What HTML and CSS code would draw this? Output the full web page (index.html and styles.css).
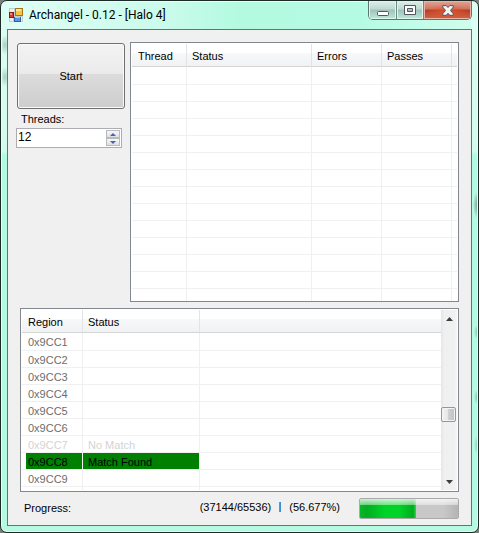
FILE: index.html
```html
<!DOCTYPE html>
<html lang="en">
<head>
<meta charset="utf-8">
<title>Archangel - 0.12 - [Halo 4]</title>
<link rel="stylesheet" href="styles.css">
</head>
<body>
<div class="window">
  <header class="titlebar">
    <svg class="app-icon" width="14" height="14" viewBox="0 0 14 14" aria-hidden="true">
      <path d="M0 0h14v14H0z" fill="#c3cfce"/>
      <path d="M1 1h4v3H1zM1 10h3v3H1zM12 9h1v4h-1z" fill="#e9f3f1"/>
      <path d="M6 0h8v8H6z" fill="#a87713"/>
      <path d="M7 1h6v6H7z" fill="#f7c53c"/>
      <path d="M7 1h5v2H7z" fill="#ffe9a0"/>
      <path d="M0 4h5v6H0z" fill="#8c1713"/>
      <path d="M1 5h3v4H1z" fill="#dc3c30"/>
      <path d="M1 5h2v2H1z" fill="#f08a80"/>
      <path d="M5 9h7v5H5z" fill="#315fae"/>
      <path d="M6 9h5v4H6z" fill="#5c94e6"/>
      <path d="M6 9h5v1H6z" fill="#a9c8f7"/>
    </svg>
    <h1 class="title">Archangel - 0.12 - [Halo 4]</h1>
    <div class="caption-buttons">
      <button class="caption" type="button" aria-label="Minimize">
        <svg width="12" height="5" viewBox="0 0 12 5"><rect x=".5" y=".5" width="11" height="4" rx="1" fill="#fff" stroke="#53565f"/></svg>
      </button>
      <button class="caption caption-max" type="button" aria-label="Maximize">
        <svg width="12" height="10" viewBox="0 0 12 10"><path fill-rule="evenodd" d="M.5.5h11v9H.5zM3.5 3.5v3h5v-3z" fill="#fff" stroke="#53565f"/></svg>
      </button>
      <button class="caption caption-close" type="button" aria-label="Close">
        <svg width="12" height="11" viewBox="0 0 12 11"><path d="M.7.6h3.6L6 2.5 7.700.6h3.600v1.400L8.500 5.500l2.800 3.300v1.500H7.700L6 8.300l-1.700 2H.7V8.800l2.800-3.300L.7 2z" fill="#f4f4f4" stroke="#53565f"/></svg>
      </button>
    </div>
  </header>

  <main class="client">
    <section class="top">
      <form class="controls">
        <button class="start" type="button">Start</button>
        <label class="threads-label" for="threads">Threads:</label>
        <div class="spinner">
          <input id="threads" type="number" value="12">
          <div class="steps">
            <button type="button" aria-label="Increase"><svg width="6" height="3" viewBox="0 0 6 3"><path d="M0 3 3 0l3 3z" fill="#4a62b0"/></svg></button>
            <button type="button" aria-label="Decrease"><svg width="6" height="3" viewBox="0 0 6 3"><path d="M0 0h6L3 3z" fill="#4a62b0"/></svg></button>
          </div>
        </div>
      </form>
      <div class="list">
        <table>
          <colgroup><col class="c-thread"><col class="c-status"><col class="c-num"><col class="c-num"><col></colgroup>
          <thead><tr><th>Thread</th><th>Status</th><th>Errors</th><th>Passes</th><th></th></tr></thead>
          <tbody>
            <tr><td></td><td></td><td></td><td></td><td></td></tr>
            <tr><td></td><td></td><td></td><td></td><td></td></tr>
            <tr><td></td><td></td><td></td><td></td><td></td></tr>
            <tr><td></td><td></td><td></td><td></td><td></td></tr>
            <tr><td></td><td></td><td></td><td></td><td></td></tr>
            <tr><td></td><td></td><td></td><td></td><td></td></tr>
            <tr><td></td><td></td><td></td><td></td><td></td></tr>
            <tr><td></td><td></td><td></td><td></td><td></td></tr>
            <tr><td></td><td></td><td></td><td></td><td></td></tr>
            <tr><td></td><td></td><td></td><td></td><td></td></tr>
            <tr><td></td><td></td><td></td><td></td><td></td></tr>
            <tr><td></td><td></td><td></td><td></td><td></td></tr>
            <tr><td></td><td></td><td></td><td></td><td></td></tr>
            <tr><td></td><td></td><td></td><td></td><td></td></tr>
          </tbody>
        </table>
      </div>
    </section>

    <section class="list regions">
      <div class="list-body">
        <table>
          <colgroup><col class="c-region"><col class="c-match"><col></colgroup>
          <thead><tr><th>Region</th><th>Status</th><th></th></tr></thead>
          <tbody>
            <tr><td>0x9CC1</td><td></td><td></td></tr>
            <tr><td>0x9CC2</td><td></td><td></td></tr>
            <tr><td>0x9CC3</td><td></td><td></td></tr>
            <tr><td>0x9CC4</td><td></td><td></td></tr>
            <tr><td>0x9CC5</td><td></td><td></td></tr>
            <tr><td>0x9CC6</td><td></td><td></td></tr>
            <tr class="miss"><td>0x9CC7</td><td>No Match</td><td></td></tr>
            <tr class="hit"><td>0x9CC8</td><td>Match Found</td><td></td></tr>
            <tr><td>0x9CC9</td><td></td><td></td></tr>
            <tr><td></td><td></td><td></td></tr>
          </tbody>
        </table>
      </div>
      <div class="scrollbar">
        <button type="button" aria-label="Scroll up"><svg width="7" height="4" viewBox="0 0 7 4"><path d="M0 4 3.500 0 7 4z" fill="#3c3c3c"/></svg></button>
        <div class="track"><div class="thumb"></div></div>
        <button type="button" aria-label="Scroll down"><svg width="7" height="4" viewBox="0 0 7 4"><path d="M0 0h7L3.500 4z" fill="#3c3c3c"/></svg></button>
      </div>
    </section>

    <footer class="status">
      <label for="progress">Progress:</label>
      <div class="counts"><span>(37144/65536)</span><span class="bar"></span><span>(56.677%)</span></div>
      <progress id="progress" value="37144" max="65536"></progress>
    </footer>
  </main>
</div>
</body>
</html>
```
FILE: styles.css
```css
* {
  box-sizing: border-box;
}

body {
  margin: 0;
  background: #77807d;
  font: 11px/13px "Liberation Sans", Arial, sans-serif;
  color: #000;
}

button,
input {
  margin: 0;
  padding: 0;
  border: 0;
  font: inherit;
  color: inherit;
}

button svg {
  display: block;
}

/* Window frame */
.window {
  display: flex;
  flex-direction: column;
  height: 100vh;
  padding: 0 6px 6px;
  border: 1px solid #1c2b27;
  border-radius: 7px;
  box-shadow: inset 0 0 0 1px #e8fff8;
  background:
    radial-gradient(ellipse 5px 14px at 100% 204px, #6f9388, transparent),
    radial-gradient(ellipse 4px 8px at 100% 331px, #7fae9f, transparent),
    radial-gradient(ellipse 4px 8px at 100% 396px, #7fae9f, transparent),
    radial-gradient(ellipse 4px 10px at 100% 444px, #8dbfae, transparent),
    radial-gradient(ellipse 5px 10px at 4px 44px, #a5cfc3, transparent),
    radial-gradient(ellipse 5px 10px at 4px 76px, #a5cfc3, transparent),
    linear-gradient(#dcfff3 0, #d2fbee 150px, transparent 154px) 0 0 / 7px 100% no-repeat,
    linear-gradient(#dcfff3 0, #d2fbee 150px, transparent 154px) 100% 0 / 7px 100% no-repeat,
    linear-gradient(90deg, #dffff5 0, #c9fbeb 35%, #b3fae1 50%, #b5fbe3 75%, #d0fdee 100%) 0 0 / 100% 29px no-repeat,
    #b3fae1;
}

.titlebar {
  display: flex;
  flex: 0 0 28px;
  align-items: flex-start;
}

.app-icon {
  margin: 7px 6px 0 2px;
}

.title {
  flex: 1;
  margin: 6px 0 0;
  font: 12px/16px Roboto, "Noto Sans", sans-serif;
  white-space: nowrap;
}

.caption-buttons {
  display: flex;
  height: 19px;
  border: 1px solid #5b7770;
  border-top: 0;
  border-radius: 0 0 5px 5px;
  overflow: hidden;
}

.caption {
  display: flex;
  align-items: center;
  justify-content: center;
  width: 27px;
  padding-top: 2px;
  background: linear-gradient(#dcefe9, #bfd9d1 45%, #9dc2b7 50%, #bcebdc);
  box-shadow: inset 0 0 0 1px #dff5ee;
}

.caption:first-child {
  padding-top: 6px;
}

.caption + .caption {
  border-left: 1px solid #6d8a82;
}

.caption-max {
  padding-top: 0;
}

.caption-close {
  width: 48px;
  padding-top: 0;
  background:
    radial-gradient(ellipse 24px 8px at 50% 65%, #e2552c, transparent),
    linear-gradient(#e2a494, #cf7562 45%, #b13a22 50%, #c86a50);
  box-shadow: inset 0 0 0 1px #eab3a4;
}

/* Client area */
.client {
  display: grid;
  flex: 1;
  grid-template-rows: 260fr 184fr 26px;
  row-gap: 6px;
  min-height: 0;
  padding: 12px 12px 1px 8px;
  border: 1px solid #60776f;
  background: #f0f0f0;
}

.top {
  display: grid;
  grid-template-columns: 109px 1fr;
  column-gap: 5px;
  min-height: 0;
}

.controls {
  display: flex;
  flex-direction: column;
  padding-top: 1px;
}

.start {
  height: 66px;
  margin-left: 1px;
  border: 1px solid #707070;
  border-radius: 3px;
  background: linear-gradient(#f3f3f3, #ebebeb 46%, #dcdcdc 47%, #cdcdcd);
  box-shadow: inset 0 0 0 1px #fafafa;
}

.threads-label {
  margin: 4px 0 2px 5px;
}

.spinner {
  display: flex;
  width: 106px;
  height: 20px;
  border: 1px solid #abadb3;
  background: #fff;
}

.spinner input {
  flex: 1;
  min-width: 0;
  padding: 0 0 2px 1px;
  background: none;
  font-size: 12px;
  appearance: textfield;
}

.spinner input::-webkit-inner-spin-button {
  appearance: none;
}

.steps {
  display: grid;
  width: 14px;
  margin: 1px;
}

.steps button,
.scrollbar button {
  display: flex;
  align-items: center;
  justify-content: center;
}

.steps button {
  border: 1px solid #b8babf;
  background: linear-gradient(#f7f7f7, #dedfe1);
}

/* Lists */
.list {
  min-width: 0;
  min-height: 0;
  padding: 1px;
  border: 1px solid #828790;
  background: #fff;
  overflow: hidden;
}

table {
  width: 100%;
  table-layout: fixed;
  border-collapse: separate;
  border-spacing: 0;
}

.c-thread {
  width: 55px;
}

.c-status {
  width: 125px;
}

.c-num {
  width: 70px;
}

.c-region {
  width: 61px;
}

.c-match {
  width: 117px;
}

th,
td {
  padding: 0 5px;
  text-align: left;
  font-weight: normal;
  white-space: nowrap;
}

th:first-child,
td:first-child {
  padding-left: 6px;
}

th {
  height: 23px;
  padding-top: 2px;
  border-right: 1px solid #e2e3e6;
  border-bottom: 1px solid #d5d5d5;
  background: linear-gradient(#fff 40%, #f7f8fa 41%, #f1f2f4);
}

td {
  height: 17px;
  padding-top: 2px;
  border-right: 1px solid #f0f0f0;
  border-bottom: 1px solid #f0f0f0;
  color: #6d6d6d;
}

tbody tr:first-child td {
  height: 18px;
}

th:last-child,
td:last-child {
  border-right: 0;
}

.miss td {
  color: #d3d3d3;
}

.hit td {
  color: #000;
  background: #008000;
  background-clip: padding-box;
}

.hit td:first-child {
  background: linear-gradient(#008000, #008000) 4px 0 no-repeat padding-box;
}

.hit td:last-child {
  background: none;
}

.regions {
  display: flex;
  margin-left: 4px;
}

.list-body {
  flex: 1;
  min-width: 0;
  overflow: hidden;
}

/* Scrollbar */
.scrollbar {
  display: flex;
  flex: 0 0 16px;
  flex-direction: column;
  background: linear-gradient(90deg, #e5e5e5, #f0f0f0 20%, #f0f0f0 80%, #f6f6f6);
}

.scrollbar button {
  flex: 0 0 17px;
  background: none;
}

.track {
  display: flex;
  flex: 1;
  flex-direction: column;
}

.track::before {
  content: "";
  flex: 80;
}

.track::after {
  content: "";
  flex: 51;
}

.thumb {
  flex: 0 0 15px;
  width: 15px;
  border: 1px solid #979797;
  border-radius: 2px;
  background: linear-gradient(90deg, #f3f3f3, #e6e6e8 45%, #cfcfd4 50%, #bfbfc6);
  box-shadow: inset 0 0 0 1px #f3f3f3;
}

/* Status line */
.status {
  display: flex;
  align-items: flex-start;
  padding-left: 8px;
}

.status label {
  flex: 1;
  padding-top: 4px;
}

.counts {
  display: flex;
  margin-right: 19px;
  padding-top: 3px;
}

.bar {
  width: 2px;
  height: 10px;
  margin: 1px 8px 0;
  background: linear-gradient(90deg, #b08555 50%, #3a8fd0 50%);
}

progress {
  width: 100px;
  height: 21px;
  border: 1px solid #aaa;
  border-radius: 2px;
  overflow: hidden;
  appearance: none;
}

progress::-webkit-progress-bar {
  background:
    linear-gradient(rgba(255, 255, 255, 0.8), rgba(255, 255, 255, 0.4) 33%, transparent 34%),
    linear-gradient(90deg, #c8c8c8 85%, #b4b4b4);
}

progress::-webkit-progress-value {
  background:
    linear-gradient(rgba(255, 255, 255, 0.8), rgba(255, 255, 255, 0.4) 33%, transparent 34%),
    linear-gradient(90deg, #0cb52a, #00ae22 12%, #00d328 45%, #00d328 70%, #00ac20 95%, #28d948);
}
```
